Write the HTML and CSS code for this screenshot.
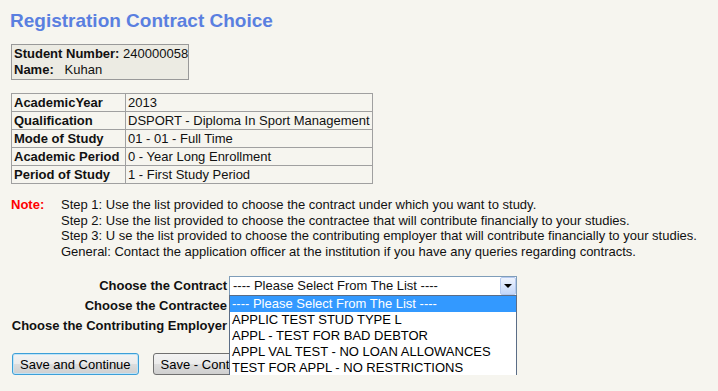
FILE: index.html
```html
<!DOCTYPE html>
<html lang="en">
<head>
    <meta charset="UTF-8">
    <title>Registration Contract Choice</title>
    <link rel="stylesheet" href="styles.css">
</head>
<body>
<div class="page">
    <h1 class="title">Registration Contract Choice</h1>

    <!-- Student details -->
    <div class="student">
        <b>Student Number:</b> 240000058<br>
        <b>Name:</b>&nbsp;&nbsp; Kuhan
    </div>

    <!-- Academic details -->
    <table class="info">
        <tr><th>AcademicYear</th><td>2013</td></tr>
        <tr><th>Qualification</th><td>DSPORT - Diploma In Sport Management</td></tr>
        <tr><th>Mode of Study</th><td>01 - 01 - Full Time</td></tr>
        <tr><th>Academic Period</th><td>0 - Year Long Enrollment</td></tr>
        <tr><th>Period of Study</th><td>1 - First Study Period</td></tr>
    </table>

    <!-- Instructions -->
    <div class="note">
        <span class="note-label">Note:</span>
        <div class="steps">
            <div>Step 1: Use the list provided to choose the contract under which you want to study.</div>
            <div>Step 2: Use the list provided to choose the contractee that will contribute financially to your studies.</div>
            <div>Step 3: U se the list provided to choose the contributing employer that will contribute financially to your studies.</div>
            <div>General: Contact the application officer at the institution if you have any queries regarding contracts.</div>
        </div>
    </div>

    <!-- Contract choices -->
    <div class="choices">
        <label>Choose the Contract</label>
        <div class="combo">
            <span class="combo-value">---- Please Select From The List ----</span>
            <span class="combo-arrow"></span>
            <ul class="combo-list">
                <li class="selected">---- Please Select From The List ----</li>
                <li>APPLIC TEST STUD TYPE L</li>
                <li>APPL - TEST FOR BAD DEBTOR</li>
                <li>APPL VAL TEST - NO LOAN ALLOWANCES</li>
                <li>TEST FOR APPL - NO RESTRICTIONS</li>
            </ul>
        </div>
        <label>Choose the Contractee</label>
        <div class="combo"></div>
        <label>Choose the Contributing Employer</label>
        <div class="combo"></div>
    </div>

    <div class="actions">
        <button type="button" class="btn focused">Save and Continue</button>
        <button type="button" class="btn">Save - Continue Later</button>
    </div>
</div>
</body>
</html>
```

FILE: styles.css
```css
body {
    margin: 0;
    background-color: #f6f5ef;
    font-family: "Liberation Sans", Arial, sans-serif;
    font-size: 13px;
    color: #111;
}

.page {
    padding: 10px 10px 0;
}

.title {
    margin: 0;
    font-size: 19px;
    line-height: 22px;
    color: #5a7fe0;
}

/* Student box */
.student {
    width: fit-content;
    margin: 12px 0 0 1px;
    padding: 1px 0 1px 2px;
    border: 1px solid #999;
    background-color: #ecebe3;
    line-height: 16px;
}

/* Academic details table */
.info {
    border-collapse: collapse;
    margin: 13px 0 0 1px;
}

.info th,
.info td {
    border: 1px solid #a0a0a0;
    padding: 1px 2px;
    line-height: 15px;
    text-align: left;
    white-space: nowrap;
}

.info th {
    width: 109px;
}

/* Note */
.note {
    display: flex;
    margin-top: 13px;
    line-height: 15.6px;
}

.note-label {
    width: 50px;
    margin-left: 1px;
    flex-shrink: 0;
    color: #f00;
    font-weight: bold;
}

/* Choices */
.choices {
    display: grid;
    grid-template-columns: 217px 288px;
    column-gap: 2px;
    margin-top: 17px;
}

.choices label {
    text-align: right;
    font-weight: bold;
    line-height: 20px;
    white-space: nowrap;
}

.combo {
    position: relative;
    display: flex;
    height: 20px;
    box-sizing: border-box;
    border: 1px solid #7f9db9;
    background-color: #fff;
}

.combo-value {
    flex: 1;
    padding-left: 3px;
    line-height: 18px;
    white-space: nowrap;
}

.combo-arrow {
    position: relative;
    width: 16px;
    height: 18px;
    box-sizing: border-box;
    border: 1px solid #b5c9ef;
    border-radius: 2px;
    background: linear-gradient(#eef3fd, #c3d7fa);
}

.combo-arrow::after {
    content: "";
    position: absolute;
    left: 3px;
    top: 6px;
    border-left: 4px solid transparent;
    border-right: 4px solid transparent;
    border-top: 4px solid #000;
}

.combo-list {
    position: absolute;
    top: 100%;
    left: -1px;
    z-index: 1;
    width: 288px;
    box-sizing: border-box;
    margin: 0;
    padding: 0;
    list-style: none;
    border: 1px solid #5b6d86;
    background-color: #fff;
}

.combo-list li {
    padding-left: 2px;
    line-height: 16px;
    white-space: nowrap;
    color: #000;
}

.combo-list li.selected {
    background-color: #3399ff;
    color: #fff;
}

/* Buttons */
.actions {
    display: flex;
    gap: 14px;
    margin: 17px 0 0 2px;
}

.btn {
    height: 22px;
    padding: 0 7px;
    border: 1px solid #707070;
    border-radius: 3px;
    background: linear-gradient(#f3f3f3, #ebebeb 50%, #dddddd 51%, #cfcfcf);
    font-family: "Liberation Sans", Arial, sans-serif;
    font-size: 13px;
    color: #000;
    white-space: nowrap;
}

.btn.focused {
    border-color: #3c9fd8;
    box-shadow: inset 0 0 0 1px #bfe3f7;
}
```
